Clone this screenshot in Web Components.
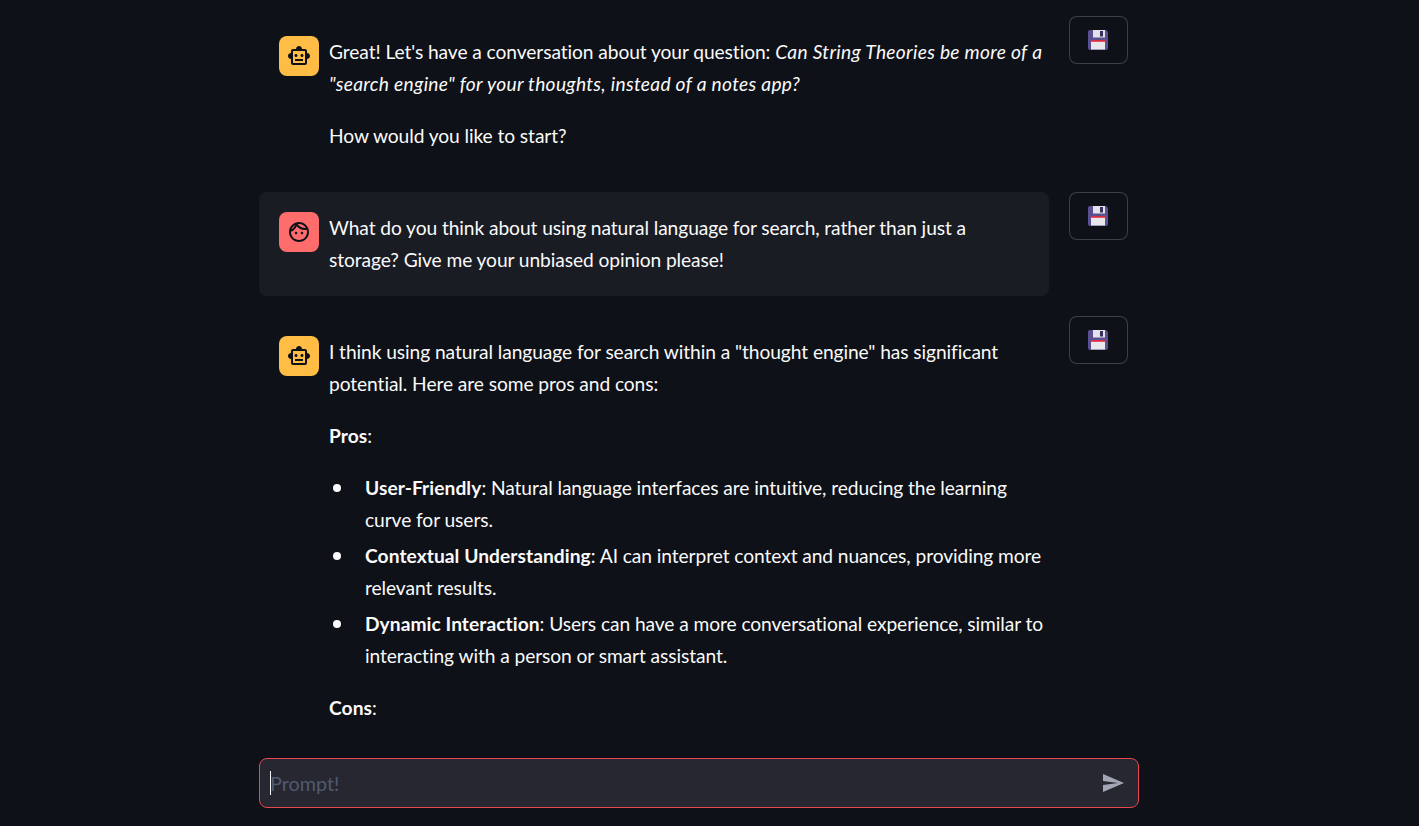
<!DOCTYPE html>
<html><head><meta charset="utf-8">
<style>
html,body{margin:0;height:100%;background:#0e1117;overflow:hidden}
body{font-family:"Lato","Noto Sans",sans-serif;color:#fafafa}
strong{letter-spacing:.06px}
em{letter-spacing:.3px}
</style></head><body>
<template id="t-app"><style>
:host{display:flex;flex-direction:column;height:826px;align-items:center;background:#0e1117;padding-right:21px}
main{flex:1;min-height:0;overflow:hidden;width:880px;padding:16px 0 0;box-sizing:border-box;display:flex;flex-direction:column;gap:20px}
footer{width:880px;height:84px;padding:16px 0 18px;box-sizing:border-box;flex:none;background:#0e1117}
</style><main><slot></slot></main><footer><slot name="input"></slot></footer></template>

<template id="t-row"><style>
:host{display:grid;grid-template-columns:790px 59px;column-gap:20px;align-items:start}
</style><slot></slot><save-button></save-button></template>

<template id="t-msg"><style>
:host{display:flex;gap:10px;padding:20px 4px 20px 20px;border-radius:8px;box-sizing:border-box;width:790px;font-size:19.2px;line-height:32px;letter-spacing:-.08px}
:host([user]){background:#1a1c24}
.av{flex:none;width:40px;height:40px;border-radius:8px;display:flex;align-items:center;justify-content:center;background:#ffbd45;color:#0e1117}
:host([user]) .av{background:#ff6c6c}
.b{flex:1;min-width:0}
svg{width:24px;height:24px;fill:currentColor;display:block}
</style><div class="av"><svg viewBox="0 0 24 24"><path id="p"/></svg></div><div class="b"><slot></slot></div></template>

<template id="t-save"><style>
:host{display:flex;width:59px;height:48px;box-sizing:border-box;border:1px solid rgba(250,250,250,.2);border-radius:8px;align-items:center;justify-content:center;background:#0e1117;padding-right:1px}
svg{width:20px;height:20px;display:block}
</style><svg viewBox="0 0 20 20">
<path d="M2 0H18L20 2V18Q20 20 18 20H2Q0 20 0 18V2Q0 0 2 0Z" fill="#5b5092"/>
<rect x="5" y="0" width="12" height="7.5" fill="#e4e2ea"/><rect x="12" y="1" width="3" height="5.5" fill="#3a2f5c"/>
<rect x="3" y="10" width="14" height="9.5" fill="#e8e8ec"/><rect x="3" y="10" width="14" height="1.8" fill="#dd2e44"/>
</svg></template>

<template id="t-p"><style>:host{display:block;margin:0 0 20px}:host([last]){margin:0}</style><slot></slot></template>

<template id="t-ul"><style>:host{display:block;margin:0 0 20px;padding-left:36px}</style><slot></slot></template>
<template id="t-li"><style>
:host{display:block;position:relative;margin-bottom:4px}
:host(:last-child){margin-bottom:0}
.d{position:absolute;left:-32px;top:12px;width:8px;height:8px;border-radius:50%;background:#fafafa}
</style><span class="d"></span><slot></slot></template>

<template id="t-input"><style>
:host{display:flex;height:50px;box-sizing:border-box;border:1px solid #e5484d;border-radius:8px;background:#262730;align-items:center;padding:0 13px 0 10px;font-size:19.8px}
.c{width:1px;height:24px;background:#fafafa;flex:none;margin-right:-1px}
.t{flex:1;color:#525a70;line-height:24px;padding-bottom:1px}
svg{width:24px;height:24px;fill:#a3a6b5;display:block;flex:none}
</style><span class="c"></span><span class="t">Prompt!</span><svg viewBox="0 0 24 24"><path d="M2.01 21L23 12 2.01 3 2 10l15 2-15 2z"/></svg></template>

<chat-app>
<chat-row><chat-msg>
<chat-p>Great! Let's have a conversation about your question: <em>Can String Theories be more of a "search engine" for your thoughts, instead of a notes app?</em></chat-p>
<chat-p last>How would you like to start?</chat-p>
</chat-msg></chat-row>
<chat-row><chat-msg user>
<chat-p last>What do you think about using natural language for search, rather than just a<br>storage? Give me your unbiased opinion please!</chat-p>
</chat-msg></chat-row>
<chat-row><chat-msg>
<chat-p>I think using natural language for search within a "thought engine" has significant potential. Here are some pros and cons:</chat-p>
<chat-p><strong>Pros</strong>:</chat-p>
<chat-ul>
<chat-li><strong>User-Friendly</strong>: Natural language interfaces are intuitive, reducing the learning curve for users.</chat-li>
<chat-li><strong>Contextual Understanding</strong>: AI can interpret context and nuances, providing more relevant results.</chat-li>
<chat-li><strong>Dynamic Interaction</strong>: Users can have a more conversational experience, similar to interacting with a person or smart assistant.</chat-li>
</chat-ul>
<chat-p><strong>Cons</strong>:</chat-p>
</chat-msg></chat-row>
<chat-input slot="input"></chat-input>
</chat-app>
<script>
const BOT="M20 9V7c0-1.1-.9-2-2-2h-3c0-1.66-1.34-3-3-3S9 3.34 9 5H6c-1.1 0-2 .9-2 2v2c-1.66 0-3 1.34-3 3s1.34 3 3 3v4c0 1.1.9 2 2 2h12c1.1 0 2-.9 2-2v-4c1.66 0 3-1.34 3-3s-1.34-3-3-3zm-2 10H6V7h12v12zm-9-6c-.83 0-1.5-.67-1.5-1.5S8.17 10 9 10s1.5.67 1.5 1.5S9.83 13 9 13zm7.5-1.5c0 .83-.67 1.5-1.5 1.5s-1.5-.67-1.5-1.5.67-1.5 1.5-1.5 1.5.67 1.5 1.5zM8 15h8v2H8v-2z";
const FACE="M10.25 13c0 .69-.56 1.25-1.25 1.25S7.75 13.69 7.75 13s.56-1.25 1.25-1.25 1.25.56 1.25 1.25zM15 11.75c-.69 0-1.25.56-1.25 1.25s.56 1.25 1.25 1.25 1.25-.56 1.25-1.25-.56-1.25-1.25-1.25zm7 .25c0 5.52-4.48 10-10 10S2 17.52 2 12 6.48 2 12 2s10 4.48 10 10zM10.66 4.12C12.06 6.44 14.6 8 17.5 8c.46 0 .91-.05 1.34-.12C17.44 5.56 14.9 4 12 4c-.46 0-.91.05-1.34.12zM4.42 9.47c1.71-.97 3.03-2.55 3.66-4.44C6.37 6 5.05 7.58 4.42 9.47zM20 12c0-.78-.12-1.53-.33-2.24-.7.15-1.42.24-2.17.24-3.13 0-5.92-1.44-7.76-3.69C8.69 8.87 6.6 10.88 4 11.86c.01.04 0 .09 0 .14 0 4.41 3.59 8 8 8s8-3.59 8-8z";
function def(name,tpl,init){customElements.define(name,class extends HTMLElement{constructor(){super();const s=this.attachShadow({mode:"open"});s.appendChild(document.getElementById(tpl).content.cloneNode(true));if(init)init(this,s);}});}
def("chat-app","t-app");
def("chat-row","t-row");
def("save-button","t-save");
def("chat-msg","t-msg",(h,s)=>{s.getElementById("p").setAttribute("d",h.hasAttribute("user")?FACE:BOT);});
def("chat-p","t-p");
def("chat-ul","t-ul");
def("chat-li","t-li");
def("chat-input","t-input");
</script>
</body></html>
